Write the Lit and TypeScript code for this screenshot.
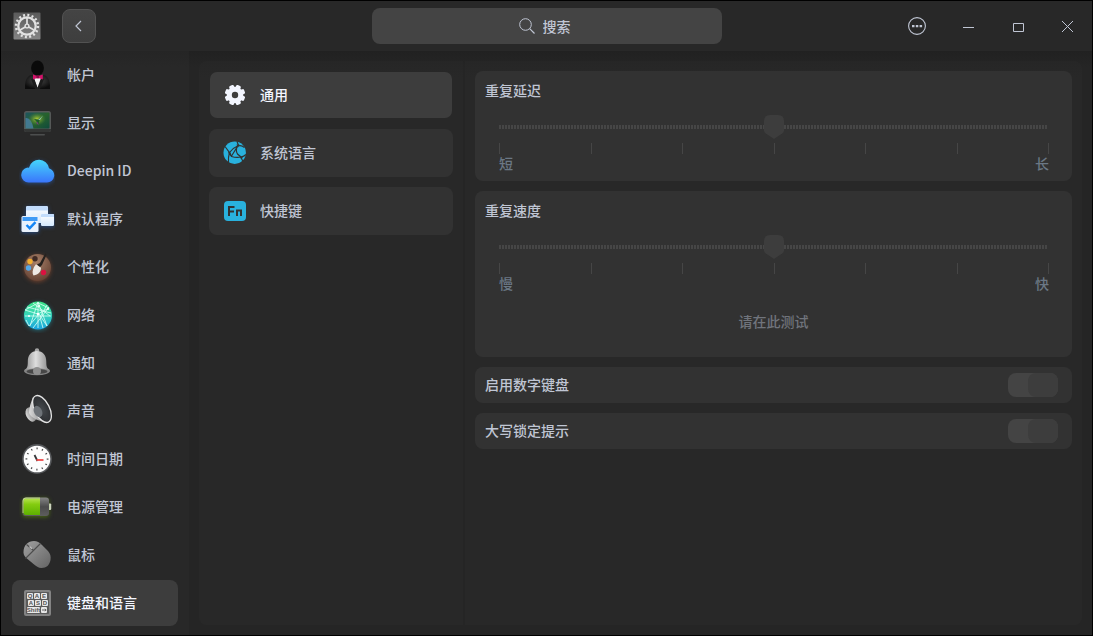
import { LitElement, html, css, svg, nothing } from "lit";
import { customElement, property, state } from "lit/decorators.js";
import { classMap } from "lit/directives/class-map.js";

const range = (n: number) => Array.from({ length: n }, (_, i) => i);

const icons = {
  account: svg`
    <defs><radialGradient id="suit" cx="0.5" cy="0.4" r="0.6"><stop offset="0" stop-color="#4a4a4a"/><stop offset="1" stop-color="#0c0c0c"/></radialGradient></defs>
    <path d="M6 32c0-8 1-12 6-14h13c5 2 6 6 6 14Z" fill="url(#suit)"/>
    <path d="M15 19h7l1 3-4.300 9.500L15 22Z" fill="#f4f4f4"/>
    <path d="M12 22l3-1 4 11h-3Z M25 22l-3-1-4 11h3Z" fill="#1c1c1c"/>
    <ellipse cx="18.500" cy="11" rx="6.400" ry="7.500" fill="#0a0a0a"/>
    <path d="M14 17.500l3.500 1.200h2.500l3.800-1.200v5l-3.800-1.300h-2.500L14 22.500Z" fill="#d3126a"/>
    <rect x="17.400" y="18.500" width="2.600" height="2.800" fill="#8d0c48"/>`,
  display: svg`
    <defs>
      <linearGradient id="scr" x1="0" y1="0" x2="1" y2="1"><stop offset="0" stop-color="#1d5560"/><stop offset="0.500" stop-color="#27622c"/><stop offset="1" stop-color="#0f4a3d"/></linearGradient>
      <radialGradient id="scr2"><stop offset="0" stop-color="#b0cf35"/><stop offset="1" stop-color="#4b8430" stop-opacity="0"/></radialGradient>
    </defs>
    <rect x="5" y="6" width="27" height="21" rx="2.500" fill="#555857"/>
    <path d="M5 24h27v.5a2.500 2.500 0 0 1-2.500 2.500h-22A2.500 2.500 0 0 1 5 24.500Z" fill="#343635"/>
    <rect x="6.500" y="7.500" width="24" height="16" rx="1" fill="url(#scr)"/>
    <path d="M6.500 13q6-1 8 10.500H6.500Z" fill="#4a7fa6" opacity=".8"/>
    <ellipse cx="18" cy="14" rx="9" ry="6.500" fill="url(#scr2)"/>
    <path d="M15 14l4 .5 5-4-3.500 5-1.500 5-1.500-4Z" fill="#1d5a2b"/>
    <path d="M19 15l5-4.500-3 4.500Z" fill="#93c9a8"/>
    <path d="M17 17l2 .5.500 3Z" fill="#7c3b86"/>
    <rect x="11" y="29" width="15" height="1.600" rx=".8" fill="#4c4e4e"/>`,
  cloud: svg`
    <defs><linearGradient id="cl" x1="0" y1="0" x2="0" y2="1"><stop offset="0" stop-color="#45d6fb"/><stop offset="1" stop-color="#3a75fb"/></linearGradient></defs>
    <path class="glow-blue" d="M9.500 29.500A7.500 7.500 0 0 1 8.500 14.600a2.800 2.800 0 0 0 1.600-.2A10.200 10.200 0 0 1 30 15.200 7.300 7.300 0 0 1 28 29.500Z" fill="url(#cl)"/>`,
  defaults: svg`
    <defs><linearGradient id="wn" x1="0" y1="0" x2="0" y2="1"><stop offset="0" stop-color="#ffffff"/><stop offset="1" stop-color="#d4e8fd"/></linearGradient></defs>
    <g class="glow-blue">
      <rect x="7" y="5" width="22" height="17" rx="1.500" fill="url(#wn)"/>
      <path d="M7 9.500V6.500A1.500 1.500 0 0 1 8.500 5h19A1.500 1.500 0 0 1 29 6.500v3Z" fill="#c3ddfc"/>
      <rect x="22" y="13" width="13" height="12" rx="1.200" fill="url(#wn)"/>
      <path d="M22 16v-2a1 1 0 0 1 1-1h11a1 1 0 0 1 1 1v2Z" fill="#c3ddfc"/>
      <rect x="2.500" y="15" width="17" height="16" rx="1.500" fill="#e9f2fd"/>
      <path d="M3.500 20v-4h15v4Z" fill="#3f9bf6"/>
    </g>
    <path d="M7.500 24l3.200 3.200 5.800-6" fill="none" stroke="#1485f5" stroke-width="2.400"/>`,
  palette: svg`
    <defs><radialGradient id="wood" cx=".45" cy=".3" r=".8"><stop offset="0" stop-color="#a78069"/><stop offset="1" stop-color="#5c3a2c"/></radialGradient></defs>
    <circle class="glow-brown" cx="18.500" cy="18.500" r="13.500" fill="url(#wood)"/>
    <circle cx="16" cy="9.800" r="2.700" fill="#3f2a24"/>
    <circle cx="11" cy="12.500" r="2.700" fill="#f2ae2f"/>
    <circle cx="9.500" cy="19" r="2.700" fill="#55a9ea"/>
    <circle cx="24.500" cy="23.500" r="2.700" fill="#da1240"/>
    <path d="M26.500 4l-5.500 10-3 1.500 2.500 3 2.500-2.500 4.500-10Z" fill="#26221f"/>
    <path d="M15 18l2-2.800 5 3.600c0 4-2.500 7-7.500 7.700-1.500-2-1-5 .5-8.500Z" fill="#eee9e4"/>`,
  network: svg`
    <defs><linearGradient id="nt" x1="0" y1="0" x2="0" y2="1"><stop offset="0" stop-color="#3fe487"/><stop offset=".5" stop-color="#35d4bb"/><stop offset="1" stop-color="#19a3e0"/></linearGradient></defs>
    <circle class="glow-teal" cx="19" cy="18.500" r="14" fill="url(#nt)"/>
    <g fill="none" stroke="#d8fff6" stroke-width=".9" opacity=".9">
      <path d="M6 13l13-7 11 5-11 6L6 13M6 19h26M19 5v26M20 17L10 29M20 17l8 12M7 23l3 6M19 5L11 29M19 5l9 24M30 10L14 31M14 6l17 13M8 10l24 6M28 8l-7 12 3 11"/>
    </g>
    <g fill="#fff"><circle cx="19" cy="17" r="1.300"/><circle cx="20" cy="9" r="1"/><circle cx="29" cy="12" r="1"/><circle cx="10" cy="19" r="1"/></g>`,
  bell: svg`
    <defs><linearGradient id="bl"><stop offset="0" stop-color="#8d8d8d"/><stop offset=".45" stop-color="#dedede"/><stop offset="1" stop-color="#868686"/></linearGradient></defs>
    <circle cx="18" cy="5.500" r="2.200" fill="#a5a5a5"/>
    <ellipse cx="18" cy="26" rx="13" ry="4.200" fill="#858585"/>
    <ellipse cx="18" cy="26.500" rx="10.500" ry="2.600" fill="#474747"/>
    <path d="M5.500 25.500c3-2 3.300-5 3.300-8.500C8.800 10 12 6 18 6s9.300 4 9.300 11c0 3.500.3 6.500 3.300 8.500-3-1.400-7-2-12.600-2s-9.600.6-12.500 2Z" fill="url(#bl)"/>
    <circle cx="18" cy="26" r="4" fill="#8e8e8e"/>`,
  sound: svg`
    <defs>
      <linearGradient id="sp"><stop offset="0" stop-color="#dadada"/><stop offset="1" stop-color="#707070"/></linearGradient>
      <radialGradient id="cone"><stop offset="0" stop-color="#44484c"/><stop offset="1" stop-color="#2d2f32"/></radialGradient>
    </defs>
    <ellipse cx="12" cy="21.500" rx="5" ry="7.500" transform="rotate(-25 12 21.500)" fill="url(#sp)"/>
    <path d="M14 4C11 12 10 16 10 20c2 5 9 8 20 10Z" fill="url(#sp)"/>
    <ellipse cx="23" cy="16" rx="7.500" ry="14.600" transform="rotate(-27 23 16)" fill="url(#cone)" stroke="#e4e4e4" stroke-width="1.300"/>
    <ellipse cx="19" cy="18.500" rx="4" ry="6" transform="rotate(-27 19 18.500)" fill="#6e7378"/>`,
  clock: svg`
    <circle cx="18" cy="18" r="14.900" fill="#55575a"/><circle cx="18" cy="18" r="13.300" fill="#fdfdfd"/>
    ${range(12).map(i => svg`<rect x="17.500" y="6.500" width="1.200" height="1.800" fill="#4a4a4a" transform="rotate(${i * 30} 18 18)"/>`)}
    <path d="M18.500 20l-3-6" stroke="#343638" stroke-width="1.800"/>
    <path d="M17.500 19h7" stroke="#ef4a4a" stroke-width="1.800"/>`,
  battery: svg`
    <defs>
      <linearGradient id="bt" x1="0" y1="0" x2="0" y2="1"><stop offset="0" stop-color="#b5e34d"/><stop offset=".35" stop-color="#84cc10"/><stop offset="1" stop-color="#5db000"/></linearGradient>
      <linearGradient id="bd" x1="0" y1="0" x2="0" y2="1"><stop offset="0" stop-color="#858585"/><stop offset=".5" stop-color="#4c4c4c"/><stop offset="1" stop-color="#5d5d5d"/></linearGradient>
    </defs>
    <rect x="29" y="14.500" width="3.200" height="6.500" rx="1" fill="#dadada"/>
    <rect class="glow-green" x="3.500" y="8.500" width="26.500" height="18.500" rx="3" fill="url(#bd)"/>
    <path d="M7 9.500h14v16.500H7a2.500 2.500 0 0 1-2.500-2.500V12A2.500 2.500 0 0 1 7 9.500Z" fill="url(#bt)"/>
    <path d="M4 24V12a3 3 0 0 1 3-3h14" fill="none" stroke="#cdec86" stroke-width=".8"/>`,
  mouse: svg`
    <defs><linearGradient id="ms" x1="0" y1="0" x2="1" y2="1"><stop offset="0" stop-color="#a0a0a0"/><stop offset="1" stop-color="#646464"/></linearGradient></defs>
    <path d="M4.500 15.500C4.500 8 9 4 15 4c3 0 5.500 1.500 8 4l6 6c2.500 3 3 5.500 2.500 9-1 5-4 8-9 8-3 0-5.500-2-8-4l-6-5c-2.500-2-4-4-4-6.500Z" fill="url(#ms)"/>
    <path d="M6.500 21.500L21.500 6.500M7.500 7.500l7 6" fill="none" stroke="#4d4d4d" stroke-width="1.100"/>
    <path d="M10.500 9.500l2.500 2.300" stroke="#bbb" stroke-width="1.500"/>`,
  keyboard: svg`
    <rect x="5" y="5" width="27" height="26" rx="2" fill="#848484"/>
    <rect x="7" y="7" width="23" height="22" rx="1" fill="#5a5a5a"/>
    <g fill="#e8e8e8">
      <rect x="8" y="8" width="6" height="6" rx="1"/><rect x="15" y="8" width="6" height="6" rx="1"/><rect x="22" y="8" width="6" height="6" rx="1"/>
      <rect x="9" y="15" width="6" height="6" rx="1"/><rect x="16" y="15" width="6" height="6" rx="1"/><rect x="23" y="15" width="6" height="6" rx="1"/>
      <rect x="8" y="22" width="13" height="6" rx="1"/><rect x="22" y="22" width="6" height="6" rx="1"/>
    </g>
    <g class="keys">
      <text x="11" y="13">Q</text><text x="18" y="13">A</text><text x="25" y="13">E</text>
      <text x="12" y="20">A</text><text x="19" y="20">S</text><text x="26" y="20">D</text>
      <text x="14.500" y="27">Shift</text>
    </g>
    <path d="M23 25h4M26 23.800l1.200 1.200-1.200 1.200" stroke="#444" stroke-width=".8" fill="none"/>`,
};

const modules = [
  { name: "帐户", icon: icons.account },
  { name: "显示", icon: icons.display },
  { name: "Deepin ID", icon: icons.cloud },
  { name: "默认程序", icon: icons.defaults },
  { name: "个性化", icon: icons.palette },
  { name: "网络", icon: icons.network },
  { name: "通知", icon: icons.bell },
  { name: "声音", icon: icons.sound },
  { name: "时间日期", icon: icons.clock },
  { name: "电源管理", icon: icons.battery },
  { name: "鼠标", icon: icons.mouse },
  { name: "键盘和语言", icon: icons.keyboard },
];

const pages = [
  {
    name: "通用",
    icon: svg`
      <g fill="#f3f6ff">
        ${range(8).map(i => svg`<rect x="9.500" y="1.700" width="5" height="8" rx="1.300" transform="rotate(${i * 45 + 22.5} 12 12)"/>`)}
        <circle cx="12" cy="12" r="8.300"/>
      </g>
      <circle cx="12" cy="12" r="3.200" fill="#3d3d3d"/>`,
  },
  {
    name: "系统语言",
    icon: svg`
      <circle cx="11.700" cy="11.700" r="11.200" fill="#29b1dd"/>
      <g fill="none" stroke="#323232" stroke-width="1.200">
        <path d="M2 5.500l4.500 6q4-5 9-7l-1.500-4M6.500 11.500Q5 16 5.500 22.500M6.500 11.500l2 4q5 1.500 9.500.5M8.500 15l6-9.500"/>
        <path d="M14 5q-1.500 5 .5 8l3.500 3q3-.5 5-2.500M15 5q3.500-1 6.500 1.500M18 16.500l2 4"/>
      </g>
      <path d="M5 10.500l2.500 1 1 4-2.500-2ZM13.500 3.500h3l-1.500 3ZM16.500 14.500l3.500 2-2 1.500Z" fill="#323232"/>`,
  },
  {
    name: "快捷键",
    icon: svg`
      <rect x="1" y="2" width="22" height="20" rx="4" fill="#29b1dd"/>
      <path d="M6 17V8h5.500M6 12.500h5M14 17v-5.500h4V17" fill="none" stroke="#323232" stroke-width="2"/>`,
  },
];

const baseText = css`
  :host {
    font: 500 14px/18px "Noto Sans CJK SC", "Noto Sans", sans-serif;
    color: #c0c6d4;
  }
  button, input { font: inherit; color: inherit; }
  * { box-sizing: border-box; }
`;

@customElement("tick-slider")
class TickSlider extends LitElement {
  @property() name = "";
  @property() low = "";
  @property() high = "";

  static styles = [baseText, css`
    :host { display: block; }
    label { display: block; }
    .scale { margin: 16px 13px 0 14px; }
    .range {
      appearance: none;
      display: block;
      width: 100%;
      height: 24px;
      margin: 0;
      background: repeating-linear-gradient(90deg, #464646 0 2px, transparent 2px 3px) left / calc(100% - 2px) 4px no-repeat;
    }
    .range::-webkit-slider-thumb {
      appearance: none;
      width: 20px;
      height: 24px;
      background: #3d3d3d;
      clip-path: path("M6 0H14Q20 0 20 6V15.500Q20 17 18.500 18.200L10 24L1.500 18.200Q0 17 0 15.500V6Q0 0 6 0Z");
    }
    .ticks { display: flex; justify-content: space-between; margin-top: 4px; }
    .tick { width: 1px; height: 11px; background: #464646; }
    .ends { display: flex; justify-content: space-between; padding-bottom: 2px; color: #6b7885; }
  `];

  render() {
    return html`
      <label for="range">${this.name}</label>
      <div class="scale">
        <input class="range" id="range" type="range" min="0" max="6" value="3">
        <div class="ticks">${range(7).map(() => html`<span class="tick"></span>`)}</div>
        <div class="ends"><span>${this.low}</span><span>${this.high}</span></div>
      </div>`;
  }
}

@customElement("app-root")
class AppRoot extends LitElement {
  @state() private module = 11;
  @state() private page = 0;

  static styles = [baseText, css`
    :host {
      display: flex;
      flex-direction: column;
      min-height: 100vh;
      border: 1px solid #000;
      background: #252525;
      box-sizing: border-box;
    }
    button { border: 0; background: none; padding: 0; text-align: left; }
    svg { display: block; flex: none; }
    .text { padding-bottom: 2px; }

    .titlebar {
      display: grid;
      grid-template-columns: 1fr minmax(0, 350px) 1fr;
      align-items: center;
      height: 50px;
      background: #282828;
    }
    .lead { display: flex; align-items: center; gap: 20px; padding-left: 11px; }
    .back {
      display: grid;
      place-items: center;
      width: 34px;
      height: 34px;
      border: 1px solid #525252;
      border-radius: 8px;
      background: linear-gradient(#444, #3e3e3e);
    }
    .search {
      display: flex;
      align-items: center;
      justify-content: center;
      gap: 8px;
      height: 36px;
      padding-right: 4px;
      border-radius: 8px;
      background: #444;
    }
    .search-input { field-sizing: content; height: 20px; padding: 0; border: 0; outline: 0; background: none; }
    .search-input::placeholder { color: #c0c6d4; }
    .controls { display: flex; justify-content: flex-end; }
    .control { display: grid; place-items: center; width: 50px; height: 50px; }

    .body { flex: 1; display: flex; }
    .sidebar {
      display: flex;
      flex-direction: column;
      gap: 2px;
      width: 188px;
      padding: 1px 11px 9px;
      background: linear-gradient(#252525, #282828 16px);
    }
    .module {
      display: flex;
      align-items: center;
      gap: 12px;
      height: 46px;
      padding-left: 7px;
      border-radius: 8px;
    }
    .module.on { background: #3d3d3d; color: #f3f6ff; }
    .keys { font: 700 6px "Liberation Sans", sans-serif; fill: #555; text-anchor: middle; }
    .glow-blue { filter: drop-shadow(0 1px 2px #2a6bd088); }
    .glow-brown { filter: drop-shadow(0 1px 2px #a8553088); }
    .glow-teal { filter: drop-shadow(0 1px 2px #1ea2b888); }
    .glow-green { filter: drop-shadow(0 1px 2px #6aa50088); }

    .content {
      flex: 1;
      display: flex;
      gap: 2px;
      padding: 10px;
      background: linear-gradient(#212121, #252525 16px);
    }
    .panel {
      display: flex;
      flex-direction: column;
      gap: 10px;
      padding: 10px;
      background: linear-gradient(#262626, #282828 16px);
    }
    .pages { width: 264px; border-radius: 8px 0 0 8px; }
    .settings { flex: 1; border-radius: 0 8px 8px 0; }
    .page {
      display: flex;
      align-items: center;
      gap: 13px;
      height: 48px;
      padding-left: 14px;
      border-radius: 8px;
      background: #323232;
    }
    .page.on {
      border: 1px solid transparent;
      padding-left: 13px;
      background: #3d3d3d padding-box;
      color: #f3f6ff;
    }
    .card { padding: 10px 10px 7px; border-radius: 8px; background: #323232; }
    .test {
      display: block;
      width: 100%;
      height: 36px;
      margin: 9px 0 11px;
      padding: 0;
      border: 0;
      outline: 0;
      background: none;
      text-align: center;
    }
    .test::placeholder { color: #70747c; }
    .row {
      display: flex;
      align-items: center;
      justify-content: space-between;
      height: 36px;
      padding: 0 14px 0 10px;
      border-radius: 8px;
      background: #323232;
    }
    .switch {
      appearance: none;
      display: flex;
      justify-content: flex-end;
      width: 50px;
      height: 24px;
      margin: 0;
      border-radius: 8px;
      background: #444;
    }
    .switch::before { content: ""; width: 30px; border-radius: 8px; background: #3d3d3d; }
    .switch:not(:checked) { justify-content: flex-start; }
  `];

  render() {
    return html`
      <header class="titlebar">
        <div class="lead">
          <svg width="30" height="30" viewBox="0 0 30 30" aria-hidden="true">
            <defs><linearGradient id="app" x1="0" y1="0" x2="0" y2="1"><stop offset="0" stop-color="#5a5a5a"/><stop offset="1" stop-color="#858585"/></linearGradient></defs>
            <rect x="1.500" y="1.500" width="27" height="27" rx="1" fill="url(#app)"/>
            <g fill="none" stroke="#e2e2e2">
              <circle cx="15" cy="15" r="8.700" stroke-width="2.200"/>
              <circle cx="15" cy="15" r="10.900" stroke-width="2.600" stroke-dasharray="2 2.280"/>
              <path d="M15 15V6.500M15 15l-7.400 4.300M15 15l7.400 4.300" stroke-width="1.700"/>
            </g>
            <circle cx="15" cy="15" r="2.600" fill="#e2e2e2"/><circle cx="15" cy="15" r="1.200" fill="#777"/>
          </svg>
          <button class="back" aria-label="返回">
            <svg width="12" height="12" viewBox="0 0 12 12"><path d="M8 1L3 6l5 5" fill="none" stroke="#c0c6d4" stroke-width="1.200"/></svg>
          </button>
        </div>
        <label class="search">
          <svg width="16" height="16" viewBox="0 0 16 16" fill="none" stroke="#c0c6d4"><circle cx="6.500" cy="6.500" r="5.800"/><path d="M10.700 10.700l4.800 4.800" stroke-width="1.200"/></svg>
          <input class="search-input" type="text" placeholder="搜索" aria-label="搜索">
        </label>
        <div class="controls">
          <button class="control" aria-label="菜单"><svg width="18" height="18" viewBox="0 0 18 18"><circle cx="9" cy="9" r="8.400" fill="none" stroke="#c0c6d4" stroke-width="1.100"/><path d="M4 8h2.500v2.200H4ZM7.800 8h2.500v2.200H7.800ZM11.600 8h2.500v2.200h-2.500Z" fill="#c0c6d4"/></svg></button>
          <button class="control" aria-label="最小化"><svg width="14" height="14" viewBox="0 0 14 14"><path d="M3 8.500h11" stroke="#c0c6d4"/></svg></button>
          <button class="control" aria-label="最大化"><svg width="14" height="14" viewBox="0 0 14 14"><path d="M3.500 4.500h10v8h-10Z" fill="none" stroke="#c0c6d4"/></svg></button>
          <button class="control" aria-label="关闭"><svg width="12" height="12" viewBox="0 0 12 12"><path d="M1 1l11 11M12 1L1 12" stroke="#c0c6d4"/></svg></button>
        </div>
      </header>
      <div class="body">
        <nav class="sidebar">
          ${modules.map((m, i) => html`
            <button class=${classMap({ module: true, on: i === this.module })}
              aria-current=${i === this.module ? "page" : nothing} @click=${() => (this.module = i)}>
              <svg width="36" height="36" viewBox="0 0 36 36" aria-hidden="true">${m.icon}</svg><span class="text">${m.name}</span>
            </button>`)}
        </nav>
        <main class="content">
          <div class="panel pages">
            ${pages.map((p, i) => html`
              <button class=${classMap({ page: true, on: i === this.page })} @click=${() => (this.page = i)}>
                <svg width="24" height="24" viewBox="0 0 24 24" aria-hidden="true">${p.icon}</svg><span class="text">${p.name}</span>
              </button>`)}
          </div>
          <div class="panel settings">
            <div class="card"><tick-slider name="重复延迟" low="短" high="长"></tick-slider></div>
            <div class="card">
              <tick-slider name="重复速度" low="慢" high="快"></tick-slider>
              <input class="test" type="text" placeholder="请在此测试" aria-label="请在此测试">
            </div>
            <label class="row"><span class="text">启用数字键盘</span><input class="switch" type="checkbox" checked></label>
            <label class="row"><span class="text">大写锁定提示</span><input class="switch" type="checkbox" checked></label>
          </div>
        </main>
      </div>`;
  }
}
